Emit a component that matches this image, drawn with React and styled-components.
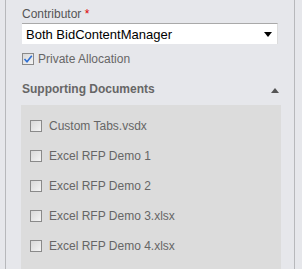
import React from "react";
import styled, { createGlobalStyle } from "styled-components";

const Global = createGlobalStyle`
  html, body {
    margin: 0;
    padding: 0;
    background: #e6e7eb;
    font-family: "Liberation Sans", Arial, sans-serif;
  }
`;

const Page = styled.div`
  width: 302px;
  height: 269px;
  overflow: hidden;
  background: #e6e7eb;
  padding-left: 5px;
  box-sizing: border-box;
`;

const Panel = styled.div`
  width: 290px;
  height: 269px;
  box-sizing: border-box;
  border-left: 1px solid #b7b8bb;
  border-right: 1px solid #b7b8bb;
  padding: 7px 12px 0 16px;
`;

const Label = styled.div`
  font-size: 12px;
  color: #555;
  line-height: 15px;
  height: 16px;
`;

const Star = styled.span`
  color: #d00;
`;

const Select = styled.div`
  height: 21px;
  width: 256px;
  box-sizing: border-box;
  background: #fff;
  border-top: 1px solid #a9a9a9;
  border-right: 1px solid #dcdcdc;
  display: flex;
  align-items: center;
  justify-content: space-between;
  padding: 0 5px 0 4px;
  font-size: 13px;
  color: #000;
`;

const Caret = styled.span`
  width: 0;
  height: 0;
  border-left: 4px solid transparent;
  border-right: 4px solid transparent;
  border-top: 5px solid #000;
  margin-top: 1px;
`;

const CheckRow = styled.label`
  display: flex;
  align-items: center;
  gap: 4px;
  font-size: 12px;
  color: #666;
  height: 30px;
  padding-left: ${(p) => p.$indent || 0}px;
`;

const Box = styled.span`
  width: 12px;
  height: 12px;
  box-sizing: border-box;
  border: 1px solid #8a8a8a;
  background: linear-gradient(135deg, #d8d8d8, #f4f4f4);
  display: flex;
  align-items: center;
  justify-content: center;
  flex: none;
`;

const DocName = styled.span`
  margin-left: 3px;
`;

const Section = styled.div`
  display: flex;
  align-items: center;
  justify-content: space-between;
  height: 31px;
  padding-right: 3px;
`;

const SectionTitle = styled.div`
  font-size: 12px;
  font-weight: bold;
  color: #666;
  margin-top: -2px;
`;

const UpArrow = styled.span`
  width: 0;
  height: 0;
  border-left: 4px solid transparent;
  border-right: 4px solid transparent;
  border-bottom: 5px solid #555;
  margin-top: 2px;
`;

const List = styled.div`
  background: #dcdcdc;
  width: 260px;
  margin-left: -1px;
  padding-top: 6px;
  height: 200px;
`;

const Check = () => (
  <svg width="10" height="10" viewBox="0 0 10 10">
    <path d="M1.5 5 L4 7.8 L8.8 1.8" fill="none" stroke="#2f6fd3" strokeWidth="1.6" />
  </svg>
);

const docs = [
  "Custom Tabs.vsdx",
  "Excel RFP Demo 1",
  "Excel RFP Demo 2",
  "Excel RFP Demo 3.xlsx",
  "Excel RFP Demo 4.xlsx",
];

const App = () => (
  <Page>
    <Global />
    <Panel>
      <Label>
        Contributor <Star>*</Star>
      </Label>
      <Select>
        <span>Both BidContentManager</span>
        <Caret />
      </Select>
      <CheckRow>
        <Box>
          <Check />
        </Box>
        Private Allocation
      </CheckRow>
      <Section>
        <SectionTitle>Supporting Documents</SectionTitle>
        <UpArrow />
      </Section>
      <List>
        {docs.map((d) => (
          <CheckRow key={d} $indent={9}>
            <Box />
            <DocName>{d}</DocName>
          </CheckRow>
        ))}
      </List>
    </Panel>
  </Page>
);

export default App;
